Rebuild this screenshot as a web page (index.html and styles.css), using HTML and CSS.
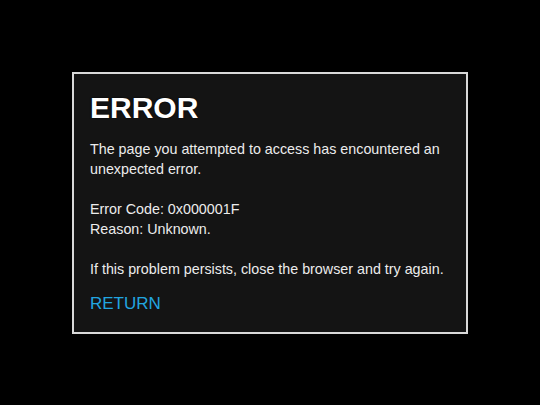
FILE: index.html
```
<!DOCTYPE html>
<html lang="en">
<head>
<meta charset="utf-8">
<title>Error</title>
<link rel="stylesheet" href="styles.css">
</head>
<body>
<main class="screen">
  <section class="dialog">
    <h1 class="title">ERROR</h1>
    <p class="text">The page you attempted to access has encountered an unexpected error.</p>
    <p class="text">Error Code: 0x000001F<br>Reason: Unknown.</p>
    <p class="text">If this problem persists, close the browser and try again.</p>
    <a class="return" href="#">RETURN</a>
  </section>
</main>
</body>
</html>
```
FILE: styles.css
```
html, body {
  margin: 0;
  padding: 0;
  background: #000;
}
body {
  font-family: "Liberation Sans", Arial, sans-serif;
  color: #ececec;
}
.screen {
  width: 540px;
  height: 405px;
  display: flex;
  align-items: center;
  justify-content: center;
}
.dialog {
  box-sizing: border-box;
  width: 396px;
  height: 262px;
  background: #141414;
  border: 2px solid #d9d9d9;
  padding: 18px 16px 16px 16px;
  display: flex;
  flex-direction: column;
}
.title {
  margin: 0 0 16px 0;
  font-size: 30px;
  line-height: 31px;
  font-weight: bold;
  color: #fff;
  text-shadow: 0 0 2px #000;
}
.text {
  margin: 0 0 20px 0;
  font-size: 14.3px;
  line-height: 20px;
}
.text:nth-of-type(3) {
  margin-bottom: 15px;
}
.return {
  font-size: 17px;
  line-height: 20px;
  color: #22a6e0;
  text-decoration: none;
  align-self: flex-start;
}
```
